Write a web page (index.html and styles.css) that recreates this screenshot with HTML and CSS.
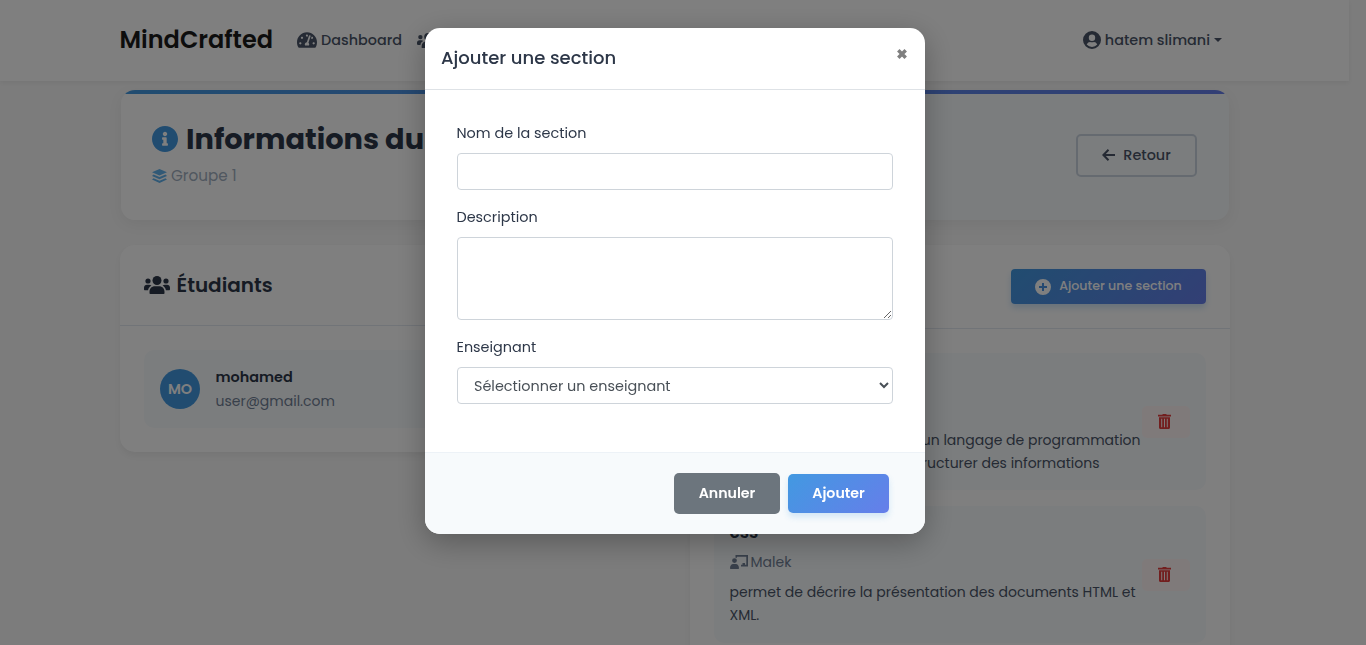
FILE: index.html
```html
<!DOCTYPE html>
<html lang="fr">
<head>
<meta charset="utf-8">
<title>MindCrafted</title>
<link rel="stylesheet" href="styles.css">
</head>
<body>
<svg class="sprite" aria-hidden="true">
  <symbol id="users" viewBox="0 0 26 18"><circle cx="13" cy="4.5" r="4.5"/><circle cx="4" cy="5" r="2.6"/><circle cx="22" cy="5" r="2.6"/><path d="M5.5 17.3v-1.6c0-3.2 2.4-5.4 5.3-5.4h4.4c2.9 0 5.3 2.2 5.3 5.4v1.6c0 .5-.3.7-.8.7H6.300c-.5 0-.8-.2-.8-.7zM0 13.200V11.800C0 10 1.300 8.800 3 8.800h2.100c.9 0 1.700.3 2.300.9-2 1-3 2.500-3.300 4.500H1c-.6 0-1-.4-1-1zM26 13.200V11.800c0-1.800-1.300-3-3-3h-2.100c-.9 0-1.700.3-2.300.9 2 1 3 2.500 3.300 4.500H25c.6 0 1-.4 1-1z"/></symbol>
  <symbol id="trash" viewBox="0 0 13 15"><path fill-rule="evenodd" d="M4.300.8 4.800 0h3.400l.5.800H13v1.700H0V.8zM1 3.300h11V13.500c0 .9-.6 1.500-1.500 1.500h-8C1.600 15 1 14.400 1 13.500zM3.200 4.700v8.600h1V4.700zM6 4.700v8.600h1V4.700zM8.800 4.700v8.600h1V4.700z"/></symbol>
</svg>

<nav class="navbar">
  <span class="brand">MindCrafted</span>
  <span class="nav-link dash">
    <svg width="20" height="18" viewBox="0 0 576 512"><path d="M288 32C128.940 32 0 160.940 0 320c0 52.800 14.250 102.260 39.060 144.800 5.610 9.620 16.300 15.200 27.440 15.200h443c11.140 0 21.830-5.580 27.440-15.200C561.750 422.260 576 372.800 576 320c0-159.060-128.940-288-288-288zm0 64c14.710 0 26.580 10.130 30.320 23.650-1.110 2.260-2.640 4.230-3.450 6.670l-9.220 27.670c-5.130 3.490-10.970 6.010-17.640 6.010-17.670 0-32-14.330-32-32S270.330 96 288 96zM96 384c-17.670 0-32-14.330-32-32s14.330-32 32-32 32 14.330 32 32-14.330 32-32 32zm48-160c-17.670 0-32-14.330-32-32s14.330-32 32-32 32 14.330 32 32-14.330 32-32 32zm246.770-72.410l-61.330 184C343.130 347.330 352 364.540 352 384c0 11.720-3.380 22.550-8.880 32H232.880c-5.500-9.450-8.880-20.280-8.880-32 0-33.940 26.500-61.430 59.900-63.590l61.340-184.010c4.170-12.560 17.730-19.450 30.360-15.170 12.570 4.190 19.350 17.790 15.170 30.360zm14.660 57.200l15.520-46.550c3.470-1.290 7.130-2.230 11.050-2.230 17.670 0 32 14.330 32 32s-14.330 32-32 32c-11.380-.01-20.890-6.280-26.570-15.220zM480 384c-17.670 0-32-14.330-32-32s14.330-32 32-32 32 14.330 32 32-14.330 32-32 32z"/></svg>
    <span class="dash-text">Dashboard</span>
  </span>
  <svg class="nav-users" width="22" height="17"><use href="#users"/></svg>
  <span class="nav-link user">
    <svg width="18" height="18" viewBox="0 0 18 18"><path fill-rule="evenodd" d="M9 0a9 9 0 1 0 0 18A9 9 0 0 0 9 0zm0 3.500a3.200 3.200 0 1 1 0 6.400 3.200 3.200 0 0 1 0-6.400zM9 16a7 7 0 0 1-5.300-2.500c.9-1.700 2-2.500 3.300-2.500.9.300 3.100.3 4 0 1.300 0 2.400.8 3.300 2.500A7 7 0 0 1 9 16z"/></svg>
    <span class="user-text">hatem slimani</span><i class="caret"></i>
  </span>
</nav>

<main class="content">
  <header class="hero">
    <div>
      <h1><svg width="26" height="26" viewBox="8 8 496 496"><path d="M256 8C119.043 8 8 119.083 8 256c0 136.997 111.043 248 248 248s248-111.003 248-248C504 119.083 392.957 8 256 8zm0 110c23.196 0 42 18.804 42 42s-18.804 42-42 42-42-18.804-42-42 18.804-42 42-42zm56 254c0 6.627-5.373 12-12 12h-88c-6.627 0-12-5.373-12-12v-24c0-6.627 5.373-12 12-12h12v-64h-12c-6.627 0-12-5.373-12-12v-24c0-6.627 5.373-12 12-12h64c6.627 0 12 5.373 12 12v100h12c6.627 0 12 5.373 12 12v24z"/></svg><span>Informations du groupe</span></h1>
      <p class="group"><svg width="15" height="14" viewBox="0 0 15 14"><path d="M7.500 0 15 3.300 7.500 6.600 0 3.300zM1.500 5.500l6 2.600 6-2.600L15 6.900l-7.500 3.300L0 6.900zM1.500 9.200l6 2.600 6-2.600 1.500 1.300L7.500 14 0 10.500z"/></svg><span>Groupe 1</span></p>
    </div>
    <button class="back"><svg width="13" height="12" viewBox="0 0 13 12" fill="none" stroke="currentColor" stroke-width="2"><path class="arrow" d="M6.500.8 1.400 6l5.100 5.200M1.500 6H13"/></svg><span>Retour</span></button>
  </header>

  <div class="columns">
    <section class="card">
      <div class="card-head students"><svg width="26" height="18"><use href="#users"/></svg><h2>Étudiants</h2></div>
      <div class="card-body">
        <div class="student">
          <div class="avatar">MO</div>
          <div><div class="name">mohamed</div><div class="mail">user@gmail.com</div></div>
        </div>
      </div>
    </section>
    <section class="card">
      <div class="card-head sections">
        <button class="add"><svg width="16" height="16" viewBox="0 0 16 16"><path fill-rule="evenodd" d="M8 0a8 8 0 1 0 0 16A8 8 0 0 0 8 0zM7 4h2v3h3v2H9v3H7V9H4V7h3z"/></svg><span>Ajouter une section</span></button>
      </div>
      <div class="card-body list">
        <article class="item first">
          <div class="item-text">
            <p class="desc end">un langage de programmation</p>
            <p class="desc end second">structurer des informations</p>
          </div>
          <button class="delete"><svg width="13" height="15"><use href="#trash"/></svg></button>
        </article>
        <article class="item">
          <div class="item-text">
            <h3>css</h3>
            <p class="teacher"><svg width="18" height="14" viewBox="0 0 18 14"><path d="M5.500 0H18v11.500h-7V9.800h1.500V8H15v1.800h1.300V1.700H7v1H5.500zM4.500 3.200a2.400 2.400 0 1 1 0 4.800 2.400 2.400 0 0 1 0-4.800zM0 13.300C0 10.800 1.300 9 3.200 9h2.600C7.700 9 9 10.800 9 13.300c0 .5-.2.7-.7.7H.7c-.5 0-.7-.2-.7-.7z"/></svg><span>Malek</span></p>
            <p class="desc css">permet de décrire la présentation des documents HTML et</p>
            <p class="desc">XML.</p>
          </div>
          <button class="delete"><svg width="13" height="15"><use href="#trash"/></svg></button>
        </article>
      </div>
    </section>
  </div>
</main>

<div class="backdrop">
  <div class="modal" role="dialog">
    <div class="modal-head">
      <h5>Ajouter une section</h5>
      <svg class="close" width="12" height="12" viewBox="0 0 12 12"><path d="M2.300 2.300 9.700 9.700M9.700 2.300 2.300 9.700" stroke="#7f7f7f" stroke-width="3.500"/></svg>
    </div>
    <div class="modal-body">
      <label for="nom" class="l-nom">Nom de la section</label>
      <input id="nom" class="field">
      <label for="desc" class="l-desc">Description</label>
      <textarea id="desc" class="field area"></textarea>
      <label for="ens" class="l-ens">Enseignant</label>
      <select id="ens" class="field select"><option>Sélectionner un enseignant</option></select>
    </div>
    <div class="modal-foot">
      <button class="cancel">Annuler</button>
      <button class="submit">Ajouter</button>
    </div>
  </div>
</div>
</body>
</html>
```
FILE: styles.css
```css
* { box-sizing: border-box; }
body {
  margin: 0; height: 645px; overflow: hidden; background: #f8f8f8;
  font: 14.4px/24px Poppins, Inter, "Noto Sans", sans-serif; color: #2d3748;
}
h1, h2, h3, h5, p { margin: 0; }
svg { fill: currentColor; flex: none; display: block; }
button { font: inherit; border: 0; display: flex; align-items: center; padding: 0; white-space: nowrap; }
.sprite { display: none; }

.navbar {
  width: 1349px; height: 81px; padding: 0 127px 2px 119.5px; background: #fff;
  display: flex; align-items: center; box-shadow: 0 2px 4px rgba(0,0,0,.05);
}
.brand { font-size: 24px; font-weight: 600; color: #1a1a1a; width: 177.5px; white-space: nowrap; }
.nav-link { display: flex; align-items: center; gap: 4px; font-weight: 500; color: #4a5568; white-space: nowrap; }
.nav-link svg { margin-top: 1px; }
.nav-users { margin: 1px 0 0 15px; color: #4a5568; }
.user { margin-left: auto; }
.caret { border: 4px solid transparent; border-top-color: currentColor; border-bottom: 0; }

.content { width: 1110px; margin: 9px 0 0 120px; }
.hero {
  position: relative; margin: 0 1px 25px; height: 130px; padding: 32px 32px 0 31px; overflow: hidden;
  display: flex; justify-content: space-between; border-radius: 14px;
  background: linear-gradient(135deg, #fff 0%, #fff 35%, #f7fafc 65%);
  box-shadow: 0 4px 15px rgba(0,0,0,.06);
}
.hero::before { content: ""; position: absolute; inset: 0 0 auto; height: 4px; background: linear-gradient(90deg, #4299e1, #667eea); }
h1 { display: flex; align-items: center; gap: 8px; height: 33px; font-size: 28.8px; font-weight: 700; white-space: nowrap; }
h1 svg { color: #4299e1; }
.group { display: flex; align-items: center; gap: 4px; margin-top: 9px; color: #a0aec0; font-size: 15.2px; }
.group svg { color: #63b3ed; }
.back {
  width: 121px; height: 43px; margin-top: 12px; padding-bottom: 1px; justify-content: center; gap: 8px;
  border: 2px solid #cbd5e0; border-radius: 5px; background: transparent; color: #4a5568; font-weight: 500;
}
.arrow { fill: none; }

.columns { display: grid; grid-template-columns: 540px 540px; gap: 30px; align-items: start; }
.card { background: #fff; border-radius: 15px; box-shadow: 0 4px 6px rgba(0,0,0,.05); }
.card-head { display: flex; align-items: center; padding: 0 24px; border-bottom: 1px solid #e2e8f0; }
.students { height: 81px; gap: 7px; padding-left: 23.500px; }
.sections { height: 84px; justify-content: flex-end; }
h2 { font-size: 20px; font-weight: 600; }
.card-body { padding: 24px; }
.student { height: 78px; padding: 0 16px; display: flex; align-items: center; gap: 15.500px; background: #f7fafc; border-radius: 10px; }
.avatar { width: 40px; height: 40px; border-radius: 50%; background: #4299e1; color: #fff; font-weight: 600; display: grid; place-items: center; }
.name { font-weight: 600; }
.mail { color: #718096; font-size: 14px; }
.add {
  width: 195px; height: 35px; justify-content: center; gap: 8px; border-radius: 4px; color: #fff;
  font-size: 12.6px; font-weight: 500; background: linear-gradient(135deg, #4299e1, #667eea);
  box-shadow: 0 4px 6px rgba(66,153,225,.25);
}
.add span { margin-top: -2px; }
.list { display: grid; gap: 16px; }
.item { height: 137px; padding: 0 16px 0 15.500px; display: flex; align-items: center; background: #f7fafc; border-radius: 10px; }
.item-text { width: 412px; height: 105px; color: #4a5568; }
.first .item-text { padding-top: 60px; }
h3 { font-size: 17px; line-height: 20px; font-weight: 600; color: #2d3748; }
.teacher { display: flex; align-items: center; gap: 3px; height: 24px; margin: 8px 0 7px; color: #718096; font-size: 14px; }
.desc { font-size: 14px; line-height: 22.500px; white-space: nowrap; }
.end { text-align: right; padding-right: 1px; }
.second { padding-right: 42px; }
.delete { width: 48px; height: 32px; padding: 0 2px 1px 0; justify-content: center; border-radius: 5px; background: #fff5f5; color: #e53e3e; }

.backdrop { position: fixed; inset: 0; background: rgba(0,0,0,.5); display: flex; justify-content: center; align-items: flex-start; padding: 28px 16px 0 0; }
.modal { width: 500px; height: 506px; background: #fff; border-radius: 15px; overflow: hidden; box-shadow: 0 8px 30px rgba(0,0,0,.28); }
.modal-head { height: 62px; padding: 0 17px 2px 16px; display: flex; align-items: center; justify-content: space-between; border-bottom: 1px solid #dee2e6; }
h5 { font-size: 18px; font-weight: 500; }
.close { margin-top: -7px; }
.modal-body { height: 362px; padding: 31px 32px 0; display: flex; flex-direction: column; align-items: flex-start; }
.modal-body label { height: 24px; margin: 0 0 8px -.5px; }
.field {
  width: 436px; height: 37px; flex: none; margin: 0 0 15px; padding: 0 12px; border: 1px solid #ced4da;
  border-radius: 4px; background: #fff; color: #495057; font: inherit;
}
.area { height: 83px; resize: vertical; }
.modal-foot { height: 82px; padding: 0 36px; display: flex; align-items: center; justify-content: flex-end; gap: 8px; background: #f7fafc; border-top: 1px solid #edf2f7; }
.cancel, .submit { justify-content: center; padding-bottom: 2px; border-radius: 5px; color: #fff; font-size: 14.2px; font-weight: 600; }
.cancel { width: 106px; height: 41px; background: #6c757d; }
.submit { width: 101px; height: 39px; background: linear-gradient(135deg, #4299e1, #667eea); box-shadow: 0 4px 6px rgba(66,153,225,.2); }
```
